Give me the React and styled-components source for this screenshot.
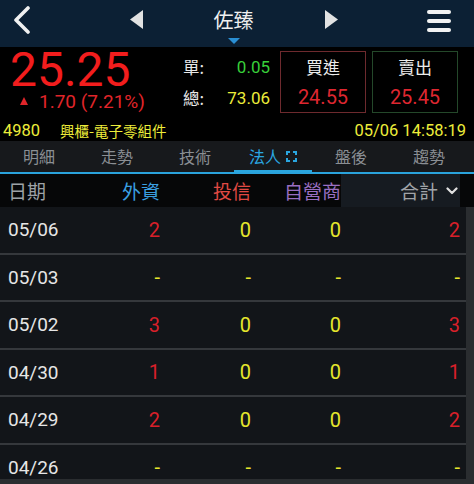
import React from "react";
import styled, { createGlobalStyle } from "styled-components";

const Global = createGlobalStyle`
  html, body { margin: 0; padding: 0; background: #2a2d30; }
  body { font-family: Roboto, "Noto Sans CJK TC", sans-serif; }
  * { box-sizing: border-box; }
`;

const Page = styled.div`
  width: 474px;
  height: 484px;
  overflow: hidden;
  background: #2a2d30;
  display: flex;
  flex-direction: column;
`;

const TopBar = styled.div`
  height: 47px;
  flex: none;
  background: #0c2034;
  display: grid;
  grid-template-columns: 124px 24px 1fr 24px 131px;
  align-items: center;
`;

const BackBtn = styled.div`
  padding-left: 13px;
  display: flex;
  align-items: center;
  height: 100%;
`;

const ArrowCell = styled.div`
  display: flex;
  justify-content: center;
  align-items: center;
  padding-bottom: 8px;
`;

const TitleCell = styled.div`
  display: flex;
  flex-direction: column;
  align-items: center;
  justify-content: flex-end;
  height: 100%;
  padding-bottom: 3px;
`;

const Title = styled.div`
  color: #f0f0f0;
  font-family: "Noto Sans CJK TC", sans-serif;
  font-size: 20px;
  line-height: 26px;
  margin-bottom: 5px;
`;

const Pointer = styled.div`
  width: 0;
  height: 0;
  border-left: 6px solid transparent;
  border-right: 6px solid transparent;
  border-top: 6px solid #2a8fd4;
`;

const MenuCell = styled.div`
  display: flex;
  justify-content: flex-end;
  padding-right: 23px;
  padding-bottom: 6px;
`;

const Burger = styled.div`
  display: flex;
  flex-direction: column;
  gap: 5px;
`;

const BurgerBar = styled.div`
  width: 24px;
  height: 4px;
  border-radius: 2px;
  background: #f2f2f2;
`;

const Quote = styled.div`
  background: #000;
  flex: none;
  height: 94px;
  padding: 4px 0 0 0;
  display: flex;
  flex-direction: column;
`;

const QuoteTop = styled.div`
  display: flex;
  height: 62px;
`;

const PriceBlock = styled.div`
  width: 183px;
  padding-left: 10px;
  display: flex;
  flex-direction: column;
`;

const Price = styled.div`
  color: #f21d1d;
  font-size: 48px;
  line-height: 38px;
  height: 39px;
  margin-top: 0;
`;

const Change = styled.div`
  color: #e0252a;
  font-size: 19px;
  line-height: 20px;
  display: flex;
  align-items: center;
  padding-left: 10px;
  margin-top: 2px;
`;

const UpTri = styled.span`
  display: inline-block;
  width: 0;
  height: 0;
  border-left: 4.5px solid transparent;
  border-right: 4.5px solid transparent;
  border-bottom: 8px solid #e0252a;
  margin-right: 11px;
  margin-top: -2px;
`;

const Stats = styled.div`
  width: 87px;
  display: grid;
  grid-template-rows: 31px 31px;
`;

const StatRow = styled.div`
  display: flex;
  justify-content: space-between;
  align-items: center;
`;

const StatLabel = styled.span`
  color: #e8e8e8;
  font-family: "Noto Sans CJK TC", sans-serif;
  font-size: 16.5px;
`;

const StatValue = styled.span`
  color: ${(p) => p.$color};
  font-size: 17px;
`;

const Boxes = styled.div`
  display: flex;
  gap: 6px;
  margin-left: 10px;
`;

const OrderBox = styled.div`
  width: 86px;
  height: 62px;
  border: 1px solid ${(p) => p.$border};
  display: grid;
  grid-template-rows: 30px 30px;
  justify-items: center;
  align-items: center;
`;

const BoxLabel = styled.div`
  color: #ececec;
  font-family: "Noto Sans CJK TC", sans-serif;
  font-size: 17px;
  line-height: 20px;
`;

const BoxPrice = styled.div`
  color: #de2730;
  font-size: 20px;
  line-height: 22px;
`;

const InfoLine = styled.div`
  margin-top: 6px;
  height: 22px;
  display: flex;
  align-items: center;
  color: #eded3a;
  padding: 0 8px 0 3px;
`;

const Code = styled.span`
  font-size: 16.5px;
  width: 57px;
`;

const Industry = styled.span`
  font-family: "Noto Sans CJK TC", sans-serif;
  font-size: 14.5px;
  flex: 1;
`;

const Time = styled.span`
  font-size: 16.5px;
`;

const TabBar = styled.div`
  flex: none;
  height: 33px;
  background: #17191c;
  border-bottom: 2px solid #2aa3dc;
  display: grid;
  grid-template-columns: repeat(6, 78px);
`;

const Tab = styled.div`
  display: flex;
  align-items: center;
  justify-content: center;
  gap: 5px;
  font-family: "Noto Sans CJK TC", sans-serif;
  font-size: 16px;
  color: ${(p) => (p.$active ? "#2aa6e0" : "#8b8f94")};
  box-shadow: ${(p) => (p.$active ? "inset 0 -2px 0 #2aa6e0" : "none")};
  padding-bottom: 1px;
`;

const List = styled.div`
  flex: none;
  height: 305px;
  overflow: hidden;
  display: flex;
  flex-direction: column;
`;

const grid = `
  display: grid;
  grid-template-columns: 70px 90px 91px 90px 119px;
  align-items: center;
`;

const HeadRow = styled.div`
  ${grid}
  height: 33px;
  flex: none;
  background: #060708;
  font-family: "Noto Sans CJK TC", sans-serif;
  font-size: 19px;
  padding-right: 14px;
`;

const HeadCell = styled.div`
  color: ${(p) => p.$color};
  text-align: ${(p) => (p.$left ? "left" : "right")};
  padding-left: ${(p) => (p.$left ? "8px" : "0")};
`;

const TotalHead = styled.div`
  height: 100%;
  background: #161b21;
  color: #a0a4a8;
  display: flex;
  align-items: center;
  justify-content: flex-end;
  gap: 8px;
  padding-right: 2px;
`;

const Body = styled.div`
  height: 272px;
  overflow: hidden;
  padding-right: 8px;
  background: #2a2d30;
`;

const Row = styled.div`
  ${grid}
  height: 47.5px;
  background: #121519;
  border-bottom: 2px solid #35383c;
  padding-right: 6px;
`;

const DateCell = styled.div`
  color: #e6e6e6;
  font-size: 19px;
  padding-left: 8px;
`;

const ValCell = styled.div`
  color: ${(p) => p.$color};
  font-size: 20px;
  text-align: right;
`;

const FullIcon = () => (
  <svg width="11" height="11" viewBox="0 0 11 11" fill="none" stroke="#2aa6e0" strokeWidth="2">
    <path d="M1 4V1h3M7 1h3v3M10 7v3H7M4 10H1V7" />
  </svg>
);

const Chevron = () => (
  <svg width="12" height="8" viewBox="0 0 12 8" fill="none" stroke="#e0e0e0" strokeWidth="2.2" strokeLinecap="round" strokeLinejoin="round">
    <path d="M1.5 1.5L6 6l4.5-4.5" />
  </svg>
);

const RED = "#d8202a";
const YEL = "#e6e62c";

const rows = [
  ["05/06", "2", "0", "0", "2"],
  ["05/03", "-", "-", "-", "-"],
  ["05/02", "3", "0", "0", "3"],
  ["04/30", "1", "0", "0", "1"],
  ["04/29", "2", "0", "0", "2"],
  ["04/26", "-", "-", "-", "-"],
];

const colorOf = (v) => (v === "-" || v === "0" ? YEL : RED);

const tabs = ["明細", "走勢", "技術", "法人", "盤後", "趨勢"];

export default function App() {
  return (
    <Page>
      <Global />
      <TopBar>
        <BackBtn>
          <svg width="20" height="28" viewBox="0 0 20 28" fill="none" stroke="#f0f0f0" strokeWidth="3.6" strokeLinecap="round" strokeLinejoin="round" style={{ marginTop: -8 }}>
            <path d="M15 2L3 14l12 12" />
          </svg>
        </BackBtn>
        <ArrowCell>
          <svg width="13" height="19" viewBox="0 0 13 19"><path d="M13 0v19L0 9.5z" fill="#e2e2e2" /></svg>
        </ArrowCell>
        <TitleCell>
          <Title>佐臻</Title>
          <Pointer />
        </TitleCell>
        <ArrowCell>
          <svg width="13" height="19" viewBox="0 0 13 19"><path d="M0 0v19l13-9.5z" fill="#e2e2e2" /></svg>
        </ArrowCell>
        <MenuCell>
          <Burger>
            <BurgerBar />
            <BurgerBar />
            <BurgerBar />
          </Burger>
        </MenuCell>
      </TopBar>

      <Quote>
        <QuoteTop>
          <PriceBlock>
            <Price>25.25</Price>
            <Change>
              <UpTri />
              1.70 (7.21%)
            </Change>
          </PriceBlock>
          <Stats>
            <StatRow>
              <StatLabel>單:</StatLabel>
              <StatValue $color="#38cf3a">0.05</StatValue>
            </StatRow>
            <StatRow>
              <StatLabel>總:</StatLabel>
              <StatValue $color="#ecec3a">73.06</StatValue>
            </StatRow>
          </Stats>
          <Boxes>
            <OrderBox $border="#6e2a2e">
              <BoxLabel>買進</BoxLabel>
              <BoxPrice>24.55</BoxPrice>
            </OrderBox>
            <OrderBox $border="#24482a">
              <BoxLabel>賣出</BoxLabel>
              <BoxPrice>25.45</BoxPrice>
            </OrderBox>
          </Boxes>
        </QuoteTop>
        <InfoLine>
          <Code>4980</Code>
          <Industry>興櫃-電子零組件</Industry>
          <Time>05/06 14:58:19</Time>
        </InfoLine>
      </Quote>

      <TabBar>
        {tabs.map((t) => (
          <Tab key={t} $active={t === "法人"}>
            {t}
            {t === "法人" && <FullIcon />}
          </Tab>
        ))}
      </TabBar>

      <List>
        <HeadRow>
          <HeadCell $left $color="#9ea2a6">日期</HeadCell>
          <HeadCell $color="#3a9fe0">外資</HeadCell>
          <HeadCell $color="#e04a44">投信</HeadCell>
          <HeadCell $color="#9a6fc2">自營商</HeadCell>
          <TotalHead>
            合計
            <Chevron />
          </TotalHead>
        </HeadRow>
        <Body>
          {rows.map((r) => (
            <Row key={r[0]}>
              <DateCell>{r[0]}</DateCell>
              {r.slice(1).map((v, i) => (
                <ValCell key={i} $color={colorOf(v)}>{v}</ValCell>
              ))}
            </Row>
          ))}
        </Body>
      </List>
    </Page>
  );
}
